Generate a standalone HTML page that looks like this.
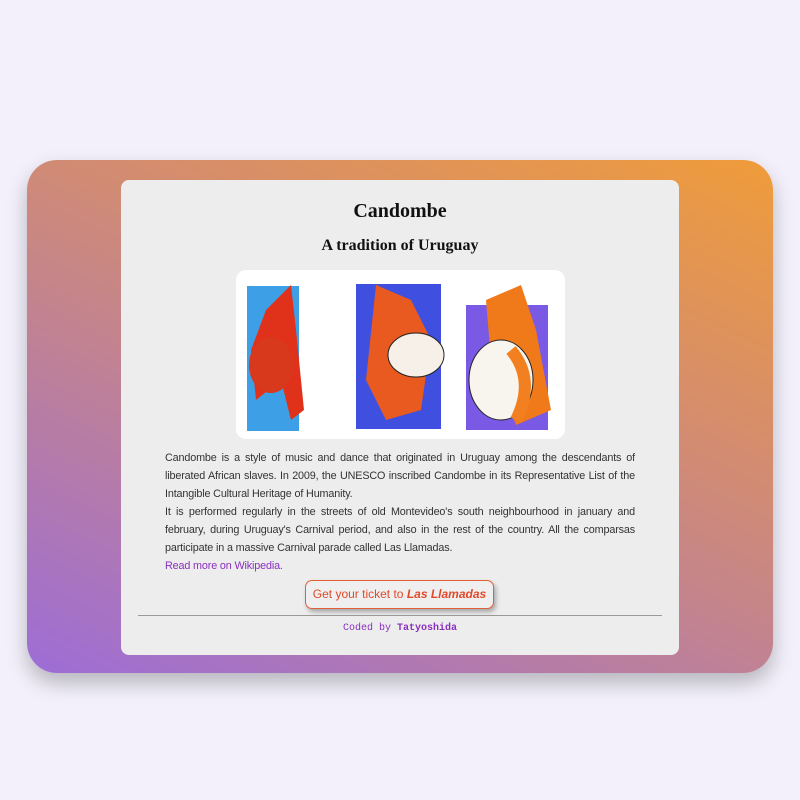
<!DOCTYPE html>
<html><head><style>
body{margin:0;width:800px;height:800px;background:#f3f0fb;font-family:"Liberation Sans",sans-serif;position:relative;overflow:hidden}
.outer{position:absolute;left:27px;top:160px;width:746px;height:513px;border-radius:30px;background:linear-gradient(25deg,#9d6dd6 0%,#c4848c 45%,#f09c3a 100%);box-shadow:0 10px 20px rgba(0,0,0,.25)}
.card{position:absolute;left:121px;top:180px;width:558px;height:475px;background:#ededed;border-radius:8px}
h1{position:absolute;top:200px;left:0;width:100%;margin:0;text-align:center;font:bold 20px "Liberation Serif",serif;color:#111}
h2{position:absolute;top:237px;left:0;width:100%;margin:0;text-align:center;font:bold 16px "Liberation Serif",serif;color:#111}
.img{position:absolute;left:236px;top:270px;width:329px;height:169px;background:#fff;border-radius:10px;overflow:hidden}
.p{position:absolute;left:165px;top:449px;width:470px;font-size:10.8px;letter-spacing:-0.15px;line-height:18px;color:#333;text-align:justify}
.p a{color:#8a2fc0;text-decoration:none}
.btn{position:absolute;left:305px;top:580px;width:187px;height:27px;border:1.5px solid #e0603a;border-radius:7px;box-shadow:2px 3px 5px rgba(0,0,0,.3);font-size:12px;color:#e04a2a;text-align:center;line-height:27px;background:#efefef}
.hr{position:absolute;left:138px;top:615px;width:524px;border-top:1px solid #999}
.f{position:absolute;top:623px;left:0;width:800px;text-align:center;font:10px "Liberation Mono",monospace;color:#8a2fc0}
</style></head><body>
<div class="outer"></div>
<div class="card"></div>
<h1>Candombe</h1>
<h2>A tradition of Uruguay</h2>
<div class="img"><svg width="329" height="169">
<rect x="11" y="16" width="52" height="145" fill="#3d9fe6"/>
<path d="M30 40 L55 15 L60 60 L68 140 L55 150 L45 110 L20 130 L15 80 Z" fill="#e0321a"/>
<ellipse cx="35" cy="95" rx="22" ry="28" fill="#d8381c"/>
<rect x="120" y="14" width="85" height="145" fill="#3f4fe0"/>
<path d="M140 15 L175 30 L195 70 L185 140 L150 150 L130 110 Z" fill="#e85a20"/>
<ellipse cx="180" cy="85" rx="28" ry="22" fill="#f7f0e8" stroke="#222"/>
<rect x="230" y="35" width="82" height="125" fill="#7a5ae4"/>
<path d="M250 30 L285 15 L300 60 L315 140 L280 155 L255 90 Z" fill="#f07a1a"/>
<ellipse cx="265" cy="110" rx="32" ry="40" fill="#f8f4ee" stroke="#222"/>
<path d="M275 80 Q300 110 280 150" stroke="#f28020" stroke-width="12" fill="none"/>
</svg></div>
<div class="p">Candombe is a style of music and dance that originated in Uruguay among the descendants of liberated African slaves. In 2009, the UNESCO inscribed Candombe in its Representative List of the Intangible Cultural Heritage of Humanity.<br>It is performed regularly in the streets of old Montevideo's south neighbourhood in january and february, during Uruguay's Carnival period, and also in the rest of the country. All the comparsas participate in a massive Carnival parade called Las Llamadas.<br><a>Read more on Wikipedia.</a></div>
<div class="btn">Get your ticket to <b><i>Las Llamadas</i></b></div>
<div class="hr"></div>
<div class="f">Coded by <b>Tatyoshida</b></div>
</body></html>
